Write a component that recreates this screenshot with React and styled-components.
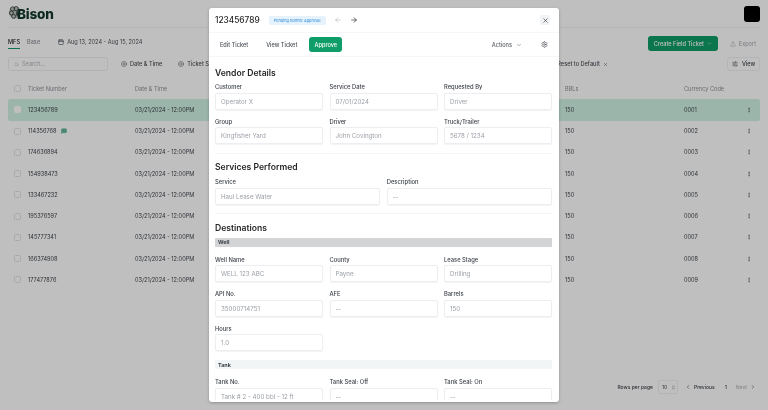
import React from 'react'
import styled, { createGlobalStyle } from 'styled-components'
import {
  ArrowLeft,
  ArrowRight,
  Calendar,
  ChevronDown,
  ChevronLeft,
  ChevronRight,
  ChevronsUpDown,
  CirclePlus,
  EllipsisVertical,
  MessageSquare,
  Search,
  Settings,
  SlidersHorizontal,
  Upload,
  X,
} from 'lucide-react'

const GlobalStyle = createGlobalStyle`
  html, body {
    margin: 0;
    height: 100%;
    background: #fff;
    font-family: Inter, "Liberation Sans", sans-serif;
    overflow: hidden;
  }
  * { box-sizing: border-box; }
`

const Page = styled.div`
  position: relative;
  width: 768px;
  height: 410px;
  display: flex;
  flex-direction: column;
  padding: 0 8px 16px;
  background: #fff;
  color: #27272a;
  font-size: 5.6px;
  overflow: hidden;
  filter: blur(0.45px);
`

const Header = styled.div`
  display: flex;
  align-items: center;
  justify-content: space-between;
  height: 28px;
  flex-shrink: 0;
  border-bottom: 1px solid #eef0f2;
`

const Brand = styled.div`
  display: flex;
  align-items: center;
`

const Wordmark = styled.span`
  font-size: 13.6px;
  font-weight: 800;
  letter-spacing: -0.2px;
  color: #14382c;
  margin-left: -9px;
`

const Avatar = styled.div`
  width: 16px;
  height: 16px;
  border-radius: 3px;
  background: #000;
`

const Toolbar = styled.div`
  display: flex;
  align-items: center;
  height: 15px;
  margin-top: 8px;
  flex-shrink: 0;
`

const PageTab = styled.span`
  margin-right: 7px;
  margin-bottom: 2px;
  color: ${({ $active }) => ($active ? '#27272a' : '#8b8f96')};
  font-weight: 500;
  padding: 3px 0;
  border-bottom: 1px solid ${({ $active }) => ($active ? '#12996a' : 'transparent')};
`

const DateRange = styled.span`
  display: flex;
  align-items: center;
  gap: 3px;
  margin-left: 11px;
  margin-bottom: 3px;
  color: #4b5057;
`

const Spacer = styled.div`
  flex: 1;
`

const CreateButton = styled.button`
  display: flex;
  align-items: center;
  justify-content: space-between;
  width: 70px;
  height: 15px;
  padding: 0 6px;
  border: 0;
  border-radius: 3px;
  background: #0f9d69;
  color: #fff;
  font: inherit;
  font-weight: 500;
  white-space: nowrap;
`

const ExportButton = styled.span`
  display: flex;
  align-items: center;
  gap: 3px;
  margin: 0 4px 0 12px;
  color: #a0a4aa;
`

const FilterRow = styled.div`
  display: flex;
  align-items: center;
  height: 14px;
  margin-top: 6px;
  flex-shrink: 0;
`

const SearchBox = styled.div`
  display: flex;
  align-items: center;
  gap: 3px;
  width: 100px;
  height: 14px;
  padding: 0 5px;
  border: 1px solid #eceef0;
  border-radius: 3px;
  color: #b0b4ba;
`

const FilterChip = styled.span`
  display: flex;
  align-items: center;
  gap: 3px;
  margin-left: ${({ $gap }) => $gap}px;
  color: #4b5057;
  font-weight: 500;
  white-space: nowrap;
`

const ViewButton = styled.span`
  display: flex;
  align-items: center;
  justify-content: center;
  gap: 4px;
  width: 33px;
  height: 14px;
  border: 1px solid #eef0f2;
  border-radius: 3px;
  color: #3f444b;
  font-weight: 500;
`

const TableWrap = styled.div`
  display: grid;
  grid-auto-rows: 21.25px;
  margin-top: 7px;
  flex-shrink: 0;
`

const Row = styled.div`
  display: grid;
  grid-template-columns: 14px 107px 430px 119px 62px 1fr;
  align-items: center;
  padding-left: 6px;
  border-radius: 2px;
  background: ${({ $selected }) => ($selected ? '#cff2e3' : 'transparent')};
  color: ${({ $head }) => ($head ? '#8b8f96' : '#3f444b')};
`

const Check = styled.span`
  width: 7px;
  height: 7px;
  border-radius: 1.5px;
  border: 1px solid ${({ $on }) => ($on ? '#fff' : '#dfe2e5')};
  background: ${({ $on }) => ($on ? '#fff' : 'transparent')};
`

const TicketCell = styled.span`
  display: flex;
  align-items: center;
  gap: 4px;
`

const Pagination = styled.div`
  display: flex;
  align-items: center;
  justify-content: flex-end;
  height: 14px;
  margin-top: auto;
  padding-right: 4px;
  font-size: 5px;
  color: #3f444b;
  font-weight: 500;
`

const RowsSelect = styled.span`
  display: flex;
  align-items: center;
  gap: 4px;
  width: 20px;
  height: 14px;
  margin: 0 7px 0 5px;
  padding-left: 3px;
  border: 1px solid #eef0f2;
  border-radius: 2px;
  font-weight: 400;
`

const PageLink = styled.span`
  display: flex;
  align-items: center;
  gap: 3px;
  color: ${({ $off }) => ($off ? '#b4b7bc' : '#3f444b')};
`

const PageNumber = styled.span`
  margin: 0 9px 0 10px;
`

const Overlay = styled.div`
  position: absolute;
  inset: 0;
  background: rgba(0, 0, 0, 0.25);
`

const Modal = styled.div`
  position: absolute;
  left: 209px;
  top: 8px;
  width: 350px;
  height: 394px;
  display: flex;
  flex-direction: column;
  padding-bottom: 2px;
  background: #fff;
  border-radius: 3px;
  box-shadow: 0 1px 3px rgba(0, 0, 0, 0.25);
`

const ModalHead = styled.div`
  display: flex;
  align-items: center;
  height: 25px;
  flex-shrink: 0;
  padding: 0 9px 0 6px;
  border-bottom: 1px solid #f6f7f8;
`

const TicketTitle = styled.span`
  font-size: 8.3px;
  font-weight: 500;
  color: #27272a;
`

const StatusBadge = styled.span`
  display: flex;
  align-items: center;
  justify-content: center;
  width: 57px;
  height: 9px;
  margin: 0 8px 0 9px;
  border-radius: 2px;
  background: #e6f2fc;
  color: #4a9bdc;
  font-size: 3.9px;
  font-weight: 500;
  white-space: nowrap;
`

const NavArrow = styled.span`
  display: flex;
  margin-right: 8px;
  color: ${({ $off }) => ($off ? '#b9bcc1' : '#27272a')};
`

const CloseButton = styled.span`
  display: flex;
  align-items: center;
  justify-content: center;
  width: 10px;
  height: 10px;
  margin-left: auto;
  border-radius: 2px;
  background: #f1f2f3;
  color: #27272a;
`

const ModalTabs = styled.div`
  display: flex;
  align-items: center;
  height: 24px;
  flex-shrink: 0;
  padding: 0 11px 0 11px;
  border-bottom: 1px solid #f6f7f8;
  color: #4b5057;
  font-weight: 500;
`

const ModalTab = styled.span`
  margin-right: ${({ $gap }) => $gap}px;
`

const ApproveButton = styled.span`
  display: flex;
  align-items: center;
  justify-content: center;
  width: 33px;
  height: 15px;
  border-radius: 3px;
  background: #0f9d69;
  color: #fff;
`

const ActionsMenu = styled.span`
  display: flex;
  align-items: center;
  gap: 4px;
  margin-left: auto;
  margin-right: 19px;
  color: #5a5f66;
`

const ModalBody = styled.div`
  flex: 1;
  min-height: 0;
  overflow: hidden;
  padding: 10px 7px 0 6px;
`

const Section = styled.section`
  padding-bottom: ${({ $pad }) => $pad}px;
  margin-bottom: ${({ $space }) => $space}px;
  border-bottom: 1px solid ${({ $pad }) => ($pad ? '#f3f4f6' : 'transparent')};
`

const SectionTitle = styled.h2`
  margin: 0 0 ${({ $gap }) => $gap}px;
  height: 12px;
  font-size: 8.6px;
  line-height: 12px;
  font-weight: 600;
  color: #27272a;
`

const FieldGrid = styled.div`
  display: grid;
  grid-template-columns: repeat(${({ $cols }) => $cols}, 1fr);
  column-gap: 6.5px;
  row-gap: 8px;
`

const Field = styled.div`
  display: flex;
  flex-direction: column;
  gap: 2.5px;
  min-width: 0;
`

const FieldLabel = styled.label`
  height: 7px;
  line-height: 7px;
  font-size: 5.8px;
  font-weight: 500;
  color: #3a3f47;
`

const FieldValue = styled.div`
  display: flex;
  align-items: center;
  height: 17px;
  padding: 0 5px;
  border: 1px solid #eceef1;
  border-radius: 2px;
  box-shadow: 0 0.5px 1px rgba(0, 0, 0, 0.05);
  font-size: 6.2px;
  color: #9a9fa6;
  white-space: nowrap;
`

const SubHead = styled.div`
  display: flex;
  align-items: center;
  height: 9px;
  padding-left: 3px;
  margin: ${({ $top }) => $top}px 0 9px;
  border-radius: 1px;
  background: ${({ $tone }) => $tone};
  font-size: 5.4px;
  font-weight: 700;
  color: #3a3f47;
`

const Mark = styled.svg`
  display: block;
  margin-top: -2px;
`

const tickets = [
  '123456789',
  '114356768',
  '174636894',
  '154938473',
  '133467232',
  '195376597',
  '145777341',
  '166374908',
  '177477876',
]

function BisonMark() {
  return (
    <Mark width="18" height="17" viewBox="0 0 18 17">
      <circle cx="7" cy="8.5" r="6" fill="#b9bdb9" />
      <g fill="none" stroke="#3b4a43" strokeWidth="0.9">
        <circle cx="4.6" cy="5" r="2.1" />
        <circle cx="8.2" cy="4.6" r="2.1" />
        <circle cx="3.4" cy="9" r="2" />
        <circle cx="5.6" cy="12.4" r="2" />
      </g>
      <path d="M8.4 7c1.8.2 3 1.6 3 3.4l-1.6 2.4-1.8-2z" fill="#3b4a43" />
    </Mark>
  )
}

function InputField({ label, value }) {
  return (
    <Field>
      <FieldLabel>{label}</FieldLabel>
      <FieldValue>{value}</FieldValue>
    </Field>
  )
}

export default function App() {
  return (
    <>
      <GlobalStyle />
      <Page>
        <Header>
          <Brand>
            <BisonMark />
            <Wordmark>Bison</Wordmark>
          </Brand>
          <Avatar />
        </Header>

        <Toolbar>
          <PageTab $active>MFS</PageTab>
          <PageTab>Base</PageTab>
          <DateRange>
            <Calendar size={6} strokeWidth={2.5} />
            Aug 13, 2024 - Aug 15, 2024
          </DateRange>
          <Spacer />
          <CreateButton>
            Create Field Ticket
            <ChevronDown size={5} />
          </CreateButton>
          <ExportButton>
            <Upload size={6} />
            Export
          </ExportButton>
        </Toolbar>

        <FilterRow>
          <SearchBox>
            <Search size={5} />
            Search...
          </SearchBox>
          <FilterChip $gap={13}>
            <CirclePlus size={6} />
            Date &amp; Time
          </FilterChip>
          <FilterChip $gap={16}>
            <CirclePlus size={6} />
            Ticket Status
          </FilterChip>
          <FilterChip $gap={335}>
            Reset to Default
            <X size={5} />
          </FilterChip>
          <Spacer />
          <ViewButton>
            <SlidersHorizontal size={6} />
            View
          </ViewButton>
        </FilterRow>

        <TableWrap>
          <Row $head>
            <Check />
            <span>Ticket Number</span>
            <span>Date &amp; Time</span>
            <span>BBLs</span>
            <span>Currency Code</span>
            <span />
          </Row>
          {tickets.map((ticket, i) => (
            <Row key={ticket} $selected={i === 0}>
              <Check $on={i === 0} />
              <TicketCell>
                {ticket}
                {i === 1 && <MessageSquare size={6} fill="#5fb795" color="#5fb795" />}
              </TicketCell>
              <span>03/21/2024 - 12:00PM</span>
              <span>150</span>
              <span>{String(i + 1).padStart(4, '0')}</span>
              <EllipsisVertical size={6} />
            </Row>
          ))}
        </TableWrap>

        <Pagination>
          Rows per page
          <RowsSelect>
            10
            <ChevronsUpDown size={5} />
          </RowsSelect>
          <PageLink>
            <ChevronLeft size={6} />
            Previous
          </PageLink>
          <PageNumber>1</PageNumber>
          <PageLink $off>
            Next
            <ChevronRight size={6} color="#3f444b" />
          </PageLink>
        </Pagination>

        <Overlay />

        <Modal>
          <ModalHead>
            <TicketTitle>123456789</TicketTitle>
            <StatusBadge>Pending Bonnie Approval</StatusBadge>
            <NavArrow $off>
              <ArrowLeft size={8} />
            </NavArrow>
            <NavArrow>
              <ArrowRight size={8} />
            </NavArrow>
            <CloseButton>
              <X size={7} />
            </CloseButton>
          </ModalHead>

          <ModalTabs>
            <ModalTab $gap={18}>Edit Ticket</ModalTab>
            <ModalTab $gap={12}>View Ticket</ModalTab>
            <ApproveButton>Approve</ApproveButton>
            <ActionsMenu>
              Actions
              <ChevronDown size={6} />
            </ActionsMenu>
            <Settings size={7} color="#3f444b" />
          </ModalTabs>

          <ModalBody>
            <Section $pad={9} $space={7}>
              <SectionTitle $gap={4}>Vendor Details</SectionTitle>
              <FieldGrid $cols={3}>
                <InputField label="Customer" value="Operator X" />
                <InputField label="Service Date" value="07/01/2024" />
                <InputField label="Requested By" value="Driver" />
                <InputField label="Group" value="Kingfisher Yard" />
                <InputField label="Driver" value="John Covington" />
                <InputField label="Truck/Trailer" value="5678 / 1234" />
              </FieldGrid>
            </Section>

            <Section $pad={8} $space={8}>
              <SectionTitle $gap={5}>Services Performed</SectionTitle>
              <FieldGrid $cols={2}>
                <InputField label="Service" value="Haul Lease Water" />
                <InputField label="Description" value="--" />
              </FieldGrid>
            </Section>

            <Section $pad={0} $space={0}>
              <SectionTitle $gap={4}>Destinations</SectionTitle>
              <SubHead $tone="#d2d4d6" $top={0}>
                Well
              </SubHead>
              <FieldGrid $cols={3}>
                <InputField label="Well Name" value="WELL 123 ABC" />
                <InputField label="County" value="Payne" />
                <InputField label="Lease Stage" value="Drilling" />
                <InputField label="API No." value="35000714751" />
                <InputField label="AFE" value="--" />
                <InputField label="Barrels" value="150" />
                <InputField label="Hours" value="1.0" />
              </FieldGrid>
              <SubHead $tone="#f1f5f5" $top={9}>
                Tank
              </SubHead>
              <FieldGrid $cols={3}>
                <InputField label="Tank No." value="Tank # 2 - 400 bbl - 12 ft" />
                <InputField label="Tank Seal: Off" value="--" />
                <InputField label="Tank Seal: On" value="--" />
              </FieldGrid>
            </Section>
          </ModalBody>
        </Modal>
      </Page>
    </>
  )
}
